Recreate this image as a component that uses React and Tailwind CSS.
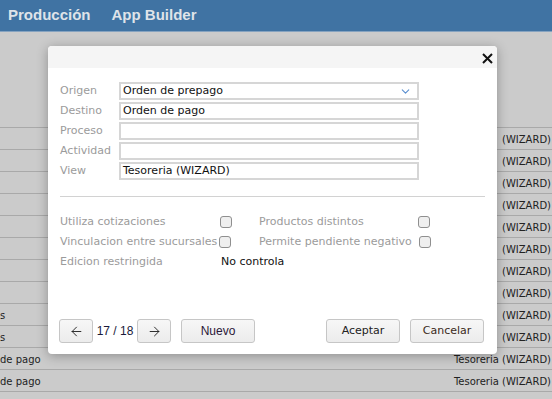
import React from 'react';
import { ArrowLeft, ArrowRight, ChevronDown } from 'lucide-react';

// ── Datos de fondo (grilla detrás del diálogo) ────────────────────────────────
const ROWS = [
  { left: '', right: '(WIZARD)' },
  { left: '', right: '(WIZARD)' },
  { left: '', right: '(WIZARD)' },
  { left: '', right: '(WIZARD)' },
  { left: '', right: '(WIZARD)' },
  { left: '', right: '(WIZARD)' },
  { left: '', right: '(WIZARD)' },
  { left: '', right: '(WIZARD)' },
  { left: 's', right: '(WIZARD)' },
  { left: 's', right: '(WIZARD)' },
  { left: 'de pago', right: 'Tesoreria (WIZARD)' },
  { left: 'de pago', right: 'Tesoreria (WIZARD)' },
  { left: '', right: '' },
];

const FIELDS = [
  { label: 'Origen', value: 'Orden de prepago', select: true },
  { label: 'Destino', value: 'Orden de pago' },
  { label: 'Proceso', value: '' },
  { label: 'Actividad', value: '' },
  { label: 'View', value: 'Tesoreria (WIZARD)' },
];

const Checkbox = () => (
  <span className="block w-[12px] h-[12px] rounded-[3px] border border-[#8f8f8f] bg-[#efefef]" />
);

const Btn = ({ children, className = '' }) => (
  <button
    className={`h-[24px] rounded-[3px] border border-[#c6c6c6] bg-gradient-to-b from-[#f7f7f7] to-[#ececec] flex items-center justify-center ${className}`}
  >
    {children}
  </button>
);

export default function App() {
  return (
    <div className="relative w-[552px] h-[399px] overflow-hidden bg-[#cbcbcb] font-['DejaVu_Sans',sans-serif]">

      {/* ── Barra superior ─────────────────────────────────────────────── */}
      <header className="h-[32px] bg-[#4073a3] border-b border-[#86a3c0] flex items-center gap-[21px] pl-[8px] font-['Liberation_Sans',Arial,sans-serif] font-bold text-[15px] text-[#dfe3e9]">
        <span>Producción</span>
        <span>App Builder</span>
      </header>

      {/* ── Grilla de fondo ────────────────────────────────────────────── */}
      <div className="h-[95px]" />
      {ROWS.map((r, i) => (
        <div key={i} className="h-[22px] pt-[2px] border-t border-[#a9a9a9] flex items-center justify-between text-[10px] text-[#222] whitespace-nowrap">
          <span>{r.left}</span>
          <span className="pr-[1px]">{r.right}</span>
        </div>
      ))}

      {/* ── Diálogo ────────────────────────────────────────────────────── */}
      <div className="absolute left-[48px] top-[46px] w-[449px] h-[308px] bg-white rounded-[4px] shadow-[0_2px_12px_rgba(0,0,0,0.3)] flex flex-col">
        <div className="h-[22px] bg-[#f5f5f5] rounded-t-[4px] flex items-center justify-end pr-[4px]">
          <svg width="11" height="11" viewBox="0 0 11 11" className="mt-[2px]">
            <path d="M1 1 L10 10 M10 1 L1 10" stroke="#111" strokeWidth="2" />
          </svg>
        </div>

        <div className="flex-1 flex flex-col px-[12px] pt-[14px]">
          {/* Campos */}
          <div className="grid grid-cols-[59px_300px] gap-y-[2px]">
            {FIELDS.map((f) => (
              <React.Fragment key={f.label}>
                <span className="h-[18px] flex items-center text-[11px] text-[#9b9b9b]">{f.label}</span>
                <div className="h-[18px] border-2 border-[#d6d6d6] flex items-center justify-between pl-[2px] pr-[5px] text-[11px] text-[#111]">
                  <span>{f.value}</span>
                  {f.select && <ChevronDown size={13} strokeWidth={2} className="text-[#5a8fd0]" />}
                </div>
              </React.Fragment>
            ))}
          </div>

          <div className="mt-[16px] h-px bg-[#d2d2d2]" />

          {/* Opciones */}
          <div className="mt-[15px] grid grid-cols-[158px_41px_159px_auto] auto-rows-[20px] items-center text-[11px] text-[#9b9b9b]">
            <span>Utiliza cotizaciones</span>
            <span className="pl-[2px]"><Checkbox /></span>
            <span>Productos distintos</span>
            <Checkbox />

            <span>Vinculacion entre sucursales</span>
            <span className="pl-[1px]"><Checkbox /></span>
            <span>Permite pendiente negativo</span>
            <span className="pl-[1px]"><Checkbox /></span>

            <span>Edicion restringida</span>
            <span className="col-span-3 pl-[3px] text-[#111]">No controla</span>
          </div>

          {/* Pie */}
          <div className="mt-auto mb-[11px] -ml-[1px] mr-[1px] flex items-center">
            <Btn className="w-[34px]"><ArrowLeft size={15} strokeWidth={1.5} className="text-[#222]" /></Btn>
            <span className="w-[44px] text-center font-['Liberation_Sans',Arial,sans-serif] text-[12px] text-[#1a1a3a]">17 / 18</span>
            <Btn className="w-[34px]"><ArrowRight size={15} strokeWidth={1.5} className="text-[#222]" /></Btn>
            <Btn className="w-[74px] ml-[10px] font-['Liberation_Sans',Arial,sans-serif] text-[12px] text-[#2b1838]">Nuevo</Btn>
            <div className="flex-1" />
            <Btn className="w-[74px] text-[11px] text-[#222]">Aceptar</Btn>
            <Btn className="w-[74px] ml-[10px] text-[11px] text-[#3a2a1a]">Cancelar</Btn>
          </div>
        </div>
      </div>
    </div>
  );
}
